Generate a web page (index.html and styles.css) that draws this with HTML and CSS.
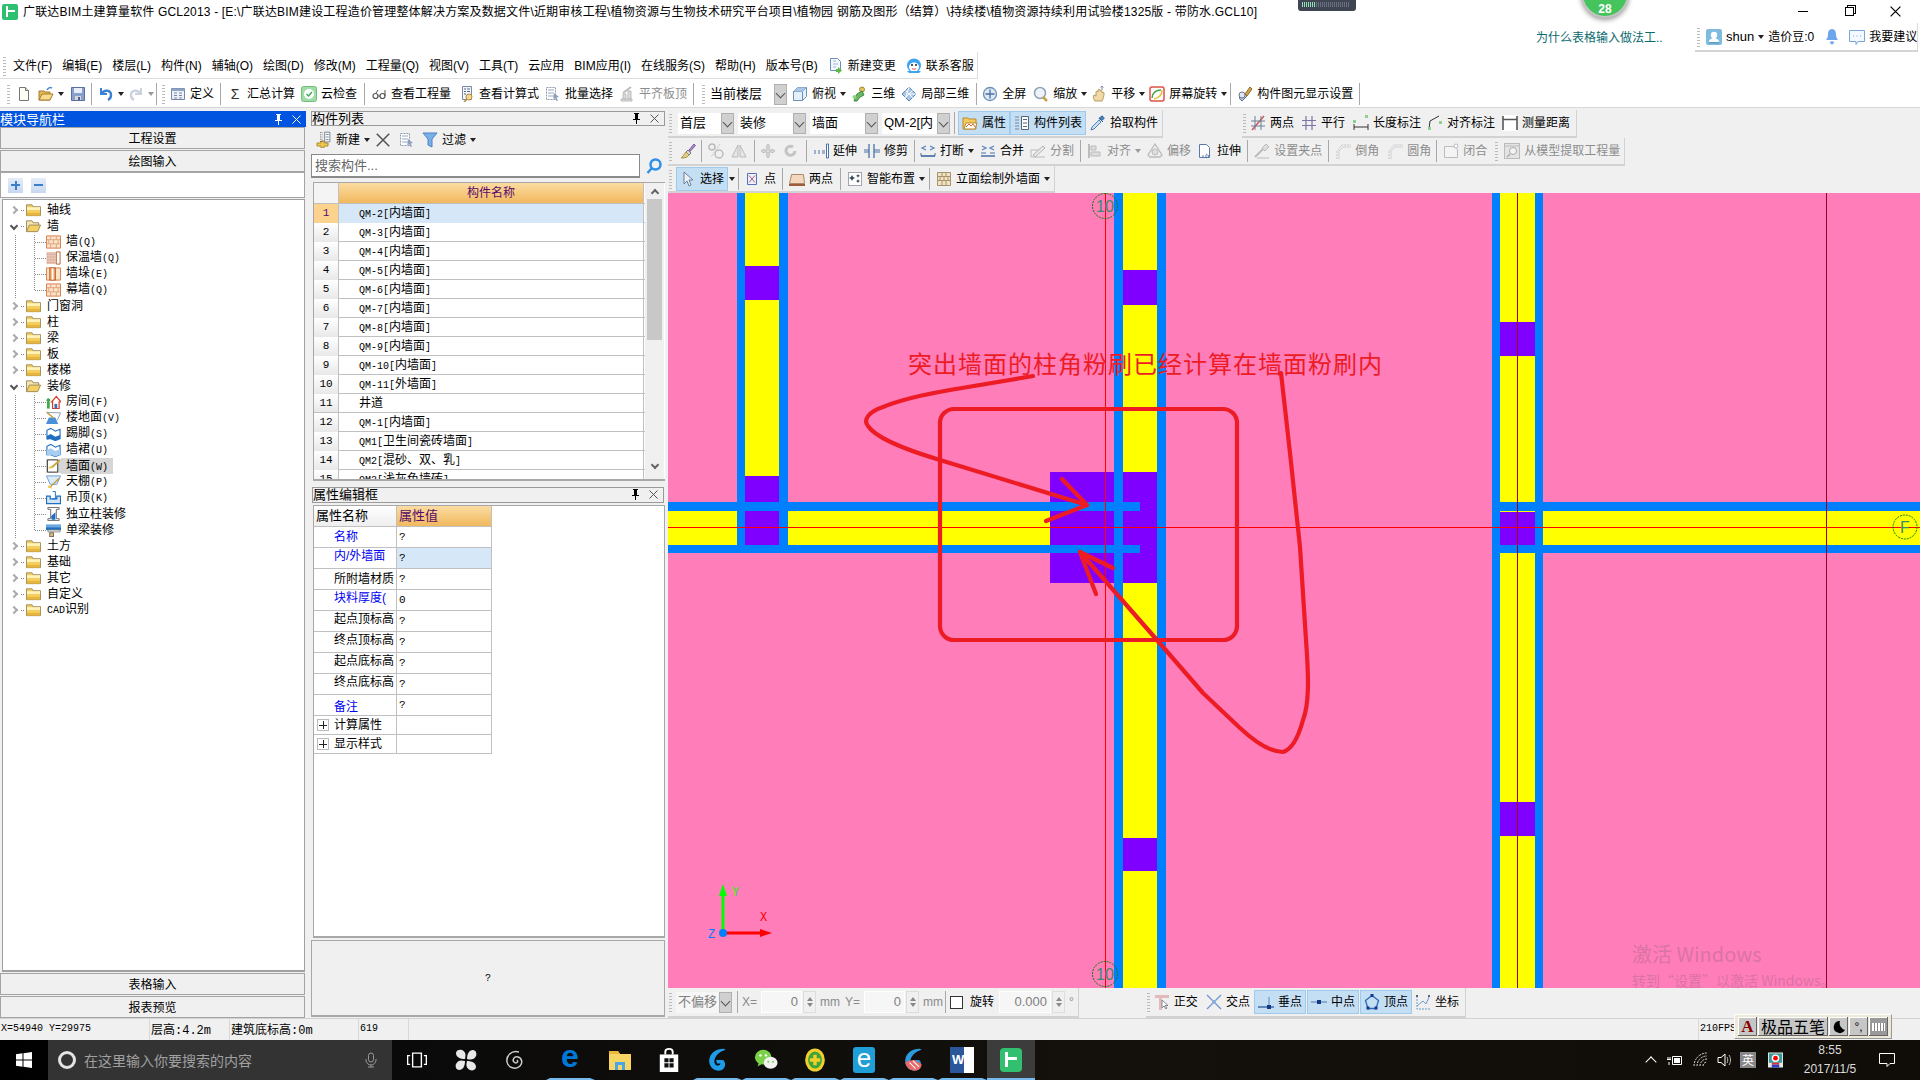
FILE: index.html
```html
<!DOCTYPE html>
<html lang="zh-CN">
<head>
<meta charset="utf-8">
<title>广联达BIM土建算量软件 GCL2013</title>
<link rel="stylesheet" href="styles.css">
</head>
<body>
<svg class="defs" width="0" height="0" aria-hidden="true">
<symbol id="new" viewBox="0 0 16 16"><path d="M3.5 1.5h6l3 3v10h-9z" fill="#fdfdf6" stroke="#777"/><path d="M9.5 1.5v3h3" fill="#ddd" stroke="#777"/></symbol>
<symbol id="open" viewBox="0 0 16 16"><path d="M1 14V5h5l1 1h5v8z" fill="#e7b955" stroke="#a67c2e"/><path d="M1 14l3-6h11l-3 6z" fill="#f8dc8e" stroke="#a67c2e"/><path d="M9 4c1-2 3-3 5-2" fill="none" stroke="#4a8ad0" stroke-width="1.5"/></symbol>
<symbol id="save" viewBox="0 0 16 16"><path d="M1.5 1.5h13v13h-13z" fill="#8aa0cc" stroke="#5a6f9f"/><path d="M4 2h8v5H4z" fill="#e8eef8"/><path d="M5 10h6v4H5z" fill="#d8d8d8"/><path d="M8 11h2v3H8z" fill="#4a5f8f"/></symbol>
<symbol id="undo" viewBox="0 0 16 16"><path d="M3 2v6h6" fill="none" stroke="#3b82d6" stroke-width="2"/><path d="M3.5 8C6 3 13 4 13 9c0 2-1 4-3 5" fill="none" stroke="#3b82d6" stroke-width="2.4"/></symbol>
<symbol id="redo" viewBox="0 0 16 16"><path d="M13 2v6H7" fill="none" stroke="#ccd3dc" stroke-width="2"/><path d="M12.5 8C10 3 3 4 3 9c0 2 1 4 3 5" fill="none" stroke="#ccd3dc" stroke-width="2.4"/></symbol>
<symbol id="def" viewBox="0 0 16 16"><path d="M1.5 2.5h13v11h-13z" fill="#eef2f8" stroke="#7487a8"/><path d="M1.5 2.5h13v2.5h-13z" fill="#8fa3c4"/><path d="M4 7h3M9 7h3M4 9.5h3M9 9.5h3M4 12h3M9 12h3" stroke="#7487a8"/></symbol>
<symbol id="cloud" viewBox="0 0 16 16"><rect x="0.5" y="0.5" width="15" height="15" rx="2" fill="#9fdca6" stroke="#6fbf7b"/><circle cx="8" cy="8" r="5" fill="#fff"/><path d="M5.5 8l2 2 3.5-4" fill="none" stroke="#45aa58" stroke-width="1.5"/></symbol>
<symbol id="glass" viewBox="0 0 16 16"><circle cx="4.5" cy="10" r="2.5" fill="none" stroke="#555" stroke-width="1.2"/><circle cx="11.5" cy="10" r="2.5" fill="none" stroke="#555" stroke-width="1.2"/><path d="M7 10h2M5 7l2-3M14 10V4" stroke="#555"/></symbol>
<symbol id="calc" viewBox="0 0 16 16"><path d="M3.5 .5h9v13h-9z" fill="#f3f5f9" stroke="#7a8aa6"/><path d="M5 3h2M8 3h3M5 5.5h2M8 5.5h3M5 8h2" stroke="#53688c"/><circle cx="10" cy="11" r="3" fill="#f6d896" stroke="#b08a3e"/><path d="M8 13l-3 3" stroke="#b08a3e" stroke-width="1.5"/></symbol>
<symbol id="batch" viewBox="0 0 16 16"><path d="M1.5 1.5h9v12h-9z" fill="#fff" stroke="#8a99b0" stroke-dasharray="2 1"/><path d="M3 4h6M3 7h6M3 10h6" stroke="#9aa9c0"/><path d="M9 7l5 4-2.500.5 1.500 3-1.500.5-1.200-3-2 1.500z" fill="#8aa0c0"/></symbol>
<symbol id="flat" viewBox="0 0 16 16"><path d="M2 13h11v2H2zM4 8h3v5H4zM9 5h3v8H9z" fill="#ddd" stroke="#bbb"/><path d="M4 7l8-6" stroke="#bbb" stroke-width="2"/></symbol>
<symbol id="cube" viewBox="0 0 16 16"><path d="M1.500 5.500l4-4h9v9l-4 4h-9z" fill="#e6f0fa" stroke="#6d8fb4"/><path d="M1.500 5.500h9v9M10.500 5.500l4-4" fill="none" stroke="#6d8fb4"/><path d="M1.500 5.500l4-4h9l-4 4z" fill="#a9c7e4"/></symbol>
<symbol id="d3" viewBox="0 0 16 16"><circle cx="11" cy="3.500" r="2.500" fill="#e3c35a" stroke="#9b8b3a"/><path d="M3 15l3-7 5-3 2 4-4 2-3 4z" fill="#6cb764" stroke="#3f8a3d"/><circle cx="3.500" cy="11" r="2" fill="#8fd081"/></symbol>
<symbol id="local" viewBox="0 0 16 16"><path d="M1 8l7-7 7 7-7 7z" fill="#a9c8e8" stroke="#5f86b4"/><path d="M4.500 4.500l7 7M8 1l-3.500 10.500M11.500 4.500l-7 7M8 8l7 0" stroke="#fff"/></symbol>
<symbol id="full" viewBox="0 0 16 16"><circle cx="8" cy="8" r="6.500" fill="#dce8f6" stroke="#6d8fb4" stroke-width="1.300"/><path d="M8 3.500v9M3.500 8h9" stroke="#4a6f9f" stroke-width="1.300"/></symbol>
<symbol id="zoom" viewBox="0 0 16 16"><circle cx="7" cy="7" r="5.500" fill="#eef3f9" stroke="#8fa3b9" stroke-width="1.500"/><path d="M10 11l4 4" stroke="#c8a24a" stroke-width="2.500"/></symbol>
<symbol id="pan" viewBox="0 0 16 16"><path d="M4 15c-2-3-2-5-1-6l2 1V6c0-1 2-1 2 0V4c0-1 2-1 2 0v1c0-1 2-1 2 0v2c0-1 2-1 2 0 0 4-1 6-2 8z" fill="#efd9a8" stroke="#b89a5e"/><path d="M11 0v4M9.500 1.500L11 0l1.500 1.500" fill="none" stroke="#7d8fa8"/></symbol>
<symbol id="rot" viewBox="0 0 16 16"><rect x="1" y="1" width="14" height="14" rx="2" fill="#fff" stroke="#e0504a" stroke-width="1.500"/><path d="M3 12c0-5 4-8 9-8" fill="none" stroke="#46a84b" stroke-width="1.500"/><path d="M13 4c0 5-3 8-8 9" fill="none" stroke="#e8c33b" stroke-width="1.500"/></symbol>
<symbol id="disp" viewBox="0 0 16 16"><path d="M2 12l5-5 3 3-5 5z" fill="#b7c3d4" stroke="#67778f"/><circle cx="5" cy="9" r="3" fill="#e2e7ef" stroke="#67778f"/><path d="M8 8l5-7 2 2-5 7z" fill="#d8a24a" stroke="#8b6a2e"/></symbol>
<symbol id="prop" viewBox="0 0 16 16"><path d="M1 14V3h5l1 1h7v10z" fill="#f5c95d" stroke="#b88b2d"/><path d="M2 14l2-6h11l-2 6z" fill="#fff" stroke="#b88b2d"/><path d="M4 12l3-3 2 2 2-2 2 3" fill="none" stroke="#d66a2c"/></symbol>
<symbol id="list" viewBox="0 0 16 16"><path d="M1.500 2h3M1.500 8h3M1.500 14h3M1.500 5h3M1.500 11h3" stroke="#333" stroke-dasharray="1 1"/><path d="M7.500 1.500h7v13h-7z" fill="#fff" stroke="#567"/><path d="M9 4.500h4M9 8h4M9 11.500h4" stroke="#567"/></symbol>
<symbol id="pick" viewBox="0 0 16 16"><path d="M1 15l1-3 7-7 2 2-7 7z" fill="#cfe0f2" stroke="#4a7fb8"/><path d="M9 3l4 4M11 1.500c1.500-1 3 .5 3 2l-2 2-3-2z" fill="#4a7fb8" stroke="#2a5f98"/></symbol>
<symbol id="twop" viewBox="0 0 16 16"><path d="M2 15L14 1" stroke="#d2534a" stroke-width="1.400"/><path d="M5 1v14M11 1v14M1 6h14M1 11h14" stroke="#6d7f9a"/></symbol>
<symbol id="par" viewBox="0 0 16 16"><path d="M5 1v14M11 1v14M1 5.500h14M1 10.500h14" stroke="#7c74a6" stroke-width="1.200"/></symbol>
<symbol id="len" viewBox="0 0 16 16"><path d="M1 15V9M15 15V9M1 12h14" stroke="#333"/><rect x="0" y="5" width="3" height="3" fill="#8fd08a"/><rect x="12" y="0" width="3" height="3" fill="#8fd08a"/></symbol>
<symbol id="ali" viewBox="0 0 16 16"><path d="M2 14L3 6l9-5" fill="none" stroke="#333"/><rect x="1" y="12" width="3" height="3" fill="#8fd08a"/><rect x="12" y="6" width="3" height="3" fill="#8fd08a"/></symbol>
<symbol id="meas" viewBox="0 0 16 16"><rect x="1" width="14" height="16" fill="#fff"/><path d="M1 1v14M15 1v14" stroke="#333" stroke-width="1.300"/><path d="M1 4.500h14" stroke="#555" stroke-width="1.500"/></symbol>
<symbol id="brush" viewBox="0 0 16 16"><path d="M9 7l5-6 1.500 1.500-5.500 6z" fill="#b08cd0" stroke="#7a5a9a"/><path d="M8 7l3 3-2 2-3-3z" fill="#d6d6d6" stroke="#777"/><path d="M6 9l3 3c-2 3-6 3-8 3 2-1 3-4 5-6z" fill="#e7d08a" stroke="#a98e3e"/></symbol>
<symbol id="g1" viewBox="0 0 16 16"><circle cx="4" cy="4" r="3" fill="none" stroke="#bbb" stroke-width="1.500"/><circle cx="11" cy="11" r="4" fill="none" stroke="#bbb" stroke-width="1.500"/><path d="M12 1L3 14" stroke="#c8c8c8" stroke-dasharray="2 1"/></symbol>
<symbol id="g2" viewBox="0 0 16 16"><path d="M7 2v12H1zM9 2v12h6z" fill="#e6e6e6" stroke="#bbb"/></symbol>
<symbol id="g3" viewBox="0 0 16 16"><path d="M8 1l2 3H9v3h3V6l3 2-3 2V9H9v3h1l-2 3-2-3h1V9H4v1L1 8l3-2v1h3V4H6z" fill="#ddd" stroke="#bbb"/></symbol>
<symbol id="g4" viewBox="0 0 16 16"><path d="M12 8a4.500 4.500 0 1 1-2-4" fill="none" stroke="#c4c4c4" stroke-width="3"/></symbol>
<symbol id="ext" viewBox="0 0 16 16"><path d="M1 8h2M5 8h2M9 8h3M1 10h2M5 10h2M9 10h3" stroke="#4a72a8"/><path d="M13.500 1v14h2V1z" fill="#fff" stroke="#4a72a8"/></symbol>
<symbol id="trim" viewBox="0 0 16 16"><path d="M5 1v14M10 1v14" stroke="#4a72a8" stroke-width="1.300"/><path d="M0 7h5M0 9h5M10 7h6M10 9h6" stroke="#4a72a8"/></symbol>
<symbol id="brk" viewBox="0 0 16 16"><path d="M1 10v3h14v-3" fill="none" stroke="#4a72a8"/><path d="M1 13h14" stroke="#4a72a8" stroke-width="1.500"/><path d="M6 3L2 5l4 2M10 3l4 2-4 2" fill="none" stroke="#5a86c0" stroke-width="1.300"/></symbol>
<symbol id="mrg" viewBox="0 0 16 16"><path d="M1 13h14" stroke="#4a72a8" stroke-width="1.500"/><path d="M1 10h5M10 10h5" stroke="#4a72a8"/><path d="M2 3l4 2-4 2M14 3l-4 2 4 2" fill="none" stroke="#5a86c0" stroke-width="1.300"/></symbol>
<symbol id="spl" viewBox="0 0 16 16"><path d="M1 14h14M1 14V7l9 0" fill="none" stroke="#bbb"/><path d="M3 12l10-9 2 2-10 9z" fill="#e8e8e8" stroke="#b4b4b4"/></symbol>
<symbol id="aln" viewBox="0 0 16 16"><path d="M2 1v14" stroke="#aaa" stroke-width="1.500"/><path d="M4 3h5v4H4zM4 9h9v4H4z" fill="#ddd" stroke="#bbb"/></symbol>
<symbol id="off" viewBox="0 0 16 16"><path d="M8 1L1 12l2 2h10l2-2z" fill="none" stroke="#bbb" stroke-width="1.300"/><circle cx="8" cy="9" r="3" fill="#ddd" stroke="#bbb"/></symbol>
<symbol id="str" viewBox="0 0 16 16"><path d="M2.500 1.500h7l3 3v10h-10z" fill="#fff" stroke="#5a7aa6"/><path d="M5 13h7M9 11l3 2-3 2" fill="none" stroke="#5a7aa6" stroke-dasharray="2 1"/></symbol>
<symbol id="grip" viewBox="0 0 16 16"><path d="M1 14l8-8" stroke="#bbb" stroke-width="2"/><path d="M8 5l4-4 3 3-4 4z" fill="#ddd" stroke="#bbb"/><path d="M3 15h12" stroke="#bbb"/></symbol>
<symbol id="cham" viewBox="0 0 16 16"><path d="M2 16V8l5-6h9" fill="none" stroke="#c4c4c4" stroke-dasharray="2 1"/><path d="M4 16V8l4-4h8" fill="none" stroke="#d0d0d0"/></symbol>
<symbol id="close" viewBox="0 0 16 16"><path d="M1.500 3.500h9.500l3.500 3v8h-13z" fill="#f4f4f4" stroke="#bbb"/><circle cx="13" cy="3" r="2" fill="#fff" stroke="#bbb"/></symbol>
<symbol id="extr" viewBox="0 0 16 16"><rect x=".5" y=".5" width="15" height="15" fill="#e4e4e4" stroke="#bbb"/><circle cx="9" cy="8" r="3.500" fill="#f4f4f4" stroke="#aaa"/><path d="M6 11l-3 3" stroke="#aaa" stroke-width="1.500"/><path d="M1 3h14" stroke="#bbb"/></symbol>
<symbol id="cur" viewBox="0 0 16 16"><path d="M4 1v12l3-3 2 5 2-1-2-5h4z" fill="#eef2f8" stroke="#6d7f9a"/></symbol>
<symbol id="pt" viewBox="0 0 16 16"><path d="M3.500 2.500h9v11h-9z" fill="#eef2fb" stroke="#5672b8"/><path d="M5 4.500l6 7M11 4.500l-6 7" stroke="#b05a82"/></symbol>
<symbol id="rect2" viewBox="0 0 16 16"><path d="M2.500 3.500h12l1 9H.5z" fill="#f4d7bc" stroke="#a88a6e"/><path d="M0 13h16v2H0z" fill="#a05b3c"/></symbol>
<symbol id="smart" viewBox="0 0 16 16"><path d="M1.500 1.500h13v13h-13z" fill="#fff" stroke="#556" stroke-dasharray="1 1"/><path d="M5 4l1 2 2 1-2 1-1 2-1-2-2-1 2-1zM11 8l.7 1.500L13 10l-1.300.7L11 12l-.7-1.300L9 10l1.300-.5zM11 3l.5 1L13 5l-1.500.5L11 7l-.5-1.500L9 5l1.500-1z" fill="#345"/></symbol>
<symbol id="wall" viewBox="0 0 16 16"><path d="M1.500 1.500h13v13h-13z" fill="#efe3c4" stroke="#a8946a"/><path d="M2 5.500h12M2 9.500h12M6 2v3.500M10 2v3.500M4 5.500v4M8 5.500v4M12 5.500v4M6 9.500v5M10 9.500v5" stroke="#a8946a"/></symbol>
<symbol id="ortho" viewBox="0 0 16 16"><path d="M1 1h14v3H1zM5 4h3v12H5z" fill="#e3b9b9"/><path d="M8 6v8l2-2 2 3 1-1-2-2.500h3z" fill="#fff" stroke="#889"/></symbol>
<symbol id="cross" viewBox="0 0 16 16"><path d="M1 1l14 14M15 1L1 15" stroke="#6c97d0" stroke-width="1.300"/><rect x="6" y="6" width="4" height="4" fill="#8faed8"/></symbol>
<symbol id="perp" viewBox="0 0 16 16"><path d="M0 13h16" stroke="#2b5a9e" stroke-width="1.300"/><path d="M11 3v10" stroke="#5a86c0"/><rect x="9" y="11" width="4" height="4" fill="#143a86"/></symbol>
<symbol id="mid" viewBox="0 0 16 16"><path d="M0 8h16" stroke="#6c8fc0" stroke-width="1.300"/><rect x="6" y="6" width="4" height="4" fill="#143a86"/></symbol>
<symbol id="vert" viewBox="0 0 16 16"><path d="M8 1.500l6.500 5-2.500 8H4l-2.500-8z" fill="none" stroke="#2b6cb8" stroke-width="1.300"/><rect x="6.500" y="0" width="3" height="3" fill="#143a86"/><rect x="2.500" y="12.500" width="3" height="3" fill="#143a86"/><rect x="10.500" y="12.500" width="3" height="3" fill="#143a86"/></symbol>
<symbol id="coord" viewBox="0 0 16 16"><path d="M2 2v13h13" fill="none" stroke="#6d9ad0" stroke-dasharray="2 1"/><path d="M2 12l6-5 3 3 3-7" fill="none" stroke="#6d9ad0"/><rect x="13" y="1" width="2" height="2" fill="#666"/><rect x="1" y="1" width="2" height="2" fill="#666"/></symbol>
<symbol id="pin" viewBox="0 0 9 11"><path d="M2 0h5v1H6v5h2v1H5v4H4V7H1V6h2V1H2z"/></symbol>
<symbol id="x" viewBox="0 0 9 9"><path d="M.5.500l8 8M8.500.500l-8 8" stroke="currentColor" fill="none"/></symbol>
<symbol id="fold" viewBox="0 0 16 14"><path d="M.5 13V1.500h6l1 2h8V13z" fill="#f6cf61" stroke="#9a8a5e"/><path d="M1 4h14v3H1z" fill="#fff1b8"/><path d="M1 10h14v3H1z" fill="#e8b53c"/></symbol>
<symbol id="foldo" viewBox="0 0 16 14"><path d="M.5 13V1.500h6l1 2h6V6" fill="#f3e6b4" stroke="#9a8a5e"/><path d="M.5 13l3-7h12l-3 7z" fill="#f6cf61" stroke="#9a8a5e"/></symbol>
<symbol id="brick" viewBox="0 0 16 14"><path d="M.5.500h15v13H.5z" fill="#fbe3c9" stroke="#d87a45"/><path d="M1 4.500h14M1 9h14M5 1v3.500M11 1v3.500M3 4.500V9M8 4.500V9M13 4.500V9M5 9v5M11 9v5" stroke="#e0a27a"/></symbol>
<symbol id="warm" viewBox="0 0 16 14"><path d="M.5.500h10v13H.5z" fill="#e9c7b7"/><path d="M11 .5h4v13h-4z" fill="#fff" stroke="#b75f2e"/><path d="M1 3h9M1 6h9M1 9h9M1 12h9" stroke="#d4968a" stroke-dasharray="2 1"/></symbol>
<symbol id="pier" viewBox="0 0 16 14"><path d="M.5.500h15v13H.5z" fill="#fbe3c9" stroke="#d87a45"/><path d="M4 .5h6v13H4z" fill="#f2a15f" stroke="#b75f2e"/><path d="M6 1h2v12H6z" fill="#fff"/></symbol>
<symbol id="room" viewBox="0 0 16 14"><path d="M6 7l5-6 5 6h-2v7H7V7z" fill="#fff" stroke="#d83a2a" stroke-width="1.300"/><path d="M9 9h3v5H9z" fill="#3a70b8"/><circle cx="2.500" cy="5" r="2" fill="#3faa4c"/><path d="M1 7h3v7H1z" fill="#3faa4c"/></symbol>
<symbol id="floor" viewBox="0 0 16 14"><path d="M.5 1l15 .5L12 9.500" fill="none" stroke="#8a9ab0"/><path d="M0 13.500l3-7h7l3 7z" fill="#4a90d8"/><path d="M1 1l7 6" stroke="#c99a3a" stroke-width="1.500"/></symbol>
<symbol id="skirt" viewBox="0 0 16 14"><path d="M1 12V3l4-2 5 3 5-2v10l-5 2-5-2z" fill="#fff" stroke="#1f6fc0" stroke-width="1.200"/><path d="M1 9l4-2 5 3 5-2v4l-5 2-5-2-4 1z" fill="#1f6fc0"/></symbol>
<symbol id="dado" viewBox="0 0 16 14"><path d="M1 12V3l4-2 5 3 5-2v10l-5 2-5-2z" fill="#fff" stroke="#1f6fc0" stroke-width="1.200"/><path d="M1 7l4-2 5 3 5-2v6l-5 2-5-2-4 1z" fill="#a9cdf0"/></symbol>
<symbol id="wallf" viewBox="0 0 16 14"><path d="M1.500.5h11v13h-11z" fill="#fff" stroke="#333"/><path d="M5 8l9-8 1.500 1.500L7 9z" fill="#c9a83e"/><path d="M2 9c2 1 4 1 5 0l-2-2z" fill="#e8c84e"/></symbol>
<symbol id="ceil" viewBox="0 0 16 14"><path d="M.5.500h15l-4 9h-7z" fill="#dcebf8" stroke="#6d9ad0"/><path d="M4 13l10-10" stroke="#c99a3a" stroke-width="1.500"/><path d="M3 10l4 4-5-1z" fill="#e8c84e"/></symbol>
<symbol id="hang" viewBox="0 0 16 14"><path d="M.5 5h4v3h7V5h4v8H.5z" fill="#cfe2f6" stroke="#1f6fc0" stroke-width="1.300"/><path d="M7 0h3v8H7" fill="none" stroke="#1f6fc0"/></symbol>
<symbol id="colf" viewBox="0 0 16 14"><path d="M2 0h12v2h-3v10h3v2H2v-2h3V2H2z" fill="#fff" stroke="#666"/><path d="M5.500 9L10 5v8H6z" fill="#1f6fc0"/></symbol>
<symbol id="beamf" viewBox="0 0 16 14"><path d="M0 1h16v3H0z" fill="#6aa8e4"/><path d="M0 4h16v3H0z" fill="#1f6fc0"/><path d="M2 7h13v2H2z" fill="#fff" stroke="#888"/><rect x="4" y="10" width="4" height="4" fill="#d8c07a" stroke="#765"/></symbol>
<symbol id="win" viewBox="0 0 16 16"><path d="M0 2.200L6.500 1.300v6.200H0zM7.500 1.200L16 0v7.500H7.500zM0 8.500h6.500v6.200L0 13.800zM7.500 8.500H16V16l-8.500-1.200z" fill="#fff"/></symbol>
<symbol id="mic" viewBox="0 0 16 16"><rect x="5.500" y="1" width="5" height="9" rx="2.500" fill="none" stroke="#999"/><path d="M3 7v1a5 5 0 0 0 10 0V7M8 13v2M5 15h6" fill="none" stroke="#999"/></symbol>
<symbol id="tv" viewBox="0 0 16 16"><path d="M4.500 2.500h7v11h-7zM2.500 4.500h-2v7h2M13.500 4.500h2v7h-2" fill="none" stroke="#fff" stroke-width="1.100"/></symbol>
<symbol id="fan" viewBox="0 0 24 24"><path d="M11 11C6 11 2 9 2 5c0-3 4-4 6-3 4 2 4 5 3 9zM13 11c0-5 2-9 6-9 3 0 4 4 3 6-2 4-5 4-9 3zM13 13c5 0 9 2 9 6 0 3-4 4-6 3-4-2-4-5-3-9zM11 13c0 5-2 9-6 9-3 0-4-4-3-6 2-4 5-4 9-3z" fill="#e8e8e8"/></symbol>
<symbol id="swirl" viewBox="0 0 20 20"><path d="M14 2C6 0 1 6 2 12c1 6 9 8 13 4 3-3 2-8-2-9-4-1-6 3-4 5 2 2 5 0 3-2" fill="none" stroke="#ccc" stroke-width="1.500"/></symbol>
<symbol id="fexp" viewBox="0 0 24 24"><path d="M1 3h9l2 3h11v16H1z" fill="#f6d565"/><path d="M1 3h9l2 3H1z" fill="#e8b93a"/><path d="M7 14h10v8H7z" fill="#46a6e8"/><path d="M10 17h4v5h-4z" fill="#f6d565"/></symbol>
<symbol id="store" viewBox="0 0 24 26"><path d="M2 7h20v19H2z" fill="#fff"/><path d="M8 7V4c0-4 8-4 8 0v3" fill="none" stroke="#fff" stroke-width="2"/><path d="M7 11h4.500v4.500H7zM12.500 11H17v4.500h-4.500zM7 16.500h4.500V21H7zM12.500 16.500H17V21h-4.500z" fill="#111"/></symbol>
<symbol id="gg" viewBox="0 0 24 28"><path d="M20 1C9 1 2 8 3 17c1 7 8 11 14 9 5-2 6-9 2-12l-8 0 1 4h4c0 2-3 3-5 2-3-2-3-8 2-13 3-3 6-4 9-5z" fill="#1e9be8"/></symbol>
<symbol id="wx" viewBox="0 0 26 24"><ellipse cx="10" cy="9" rx="9" ry="8" fill="#7bd148"/><path d="M5 15l-1 4 5-3z" fill="#7bd148"/><circle cx="7" cy="7" r="1.300" fill="#fff"/><circle cx="13" cy="7" r="1.300" fill="#fff"/><ellipse cx="18" cy="15" rx="7.500" ry="6.500" fill="#f2f2f2"/><circle cx="15.500" cy="14" r="1.100" fill="#7bd148"/><circle cx="20.500" cy="14" r="1.100" fill="#7bd148"/></symbol>
<symbol id="s360" viewBox="0 0 24 28"><ellipse cx="12" cy="14" rx="11.500" ry="13.500" fill="#f3cf2c"/><ellipse cx="12" cy="14" rx="8" ry="10" fill="#3fa43a"/><path d="M10 8h4v4h4v4h-4v4h-4v-4H6v-4h4z" fill="#f3cf2c"/></symbol>
<symbol id="gg2" viewBox="0 0 24 28"><path d="M20 1C9 1 2 8 3 17c1 7 8 11 14 9 5-2 6-9 2-12l-8 0 1 4h4c0 2-3 3-5 2-3-2-3-8 2-13 3-3 6-4 9-5z" fill="#2b9ae0"/><path d="M3 17c1 7 8 11 14 9 4-1 5-5 5-7l-8-5-8 1z" fill="#e86a6a"/><path d="M8 17l7 7M12 15l7 7" stroke="#fff" stroke-width="1.200"/></symbol>
<symbol id="chat" viewBox="0 0 16 16"><path d="M.5 1.500h15v11H9l-2 3v-3H.5z" fill="#f4f8ff" stroke="#7aa4dc"/><path d="M4 7h1M7.500 7h1M11 7h1" stroke="#7aa4dc"/></symbol>
<symbol id="bell" viewBox="0 0 12 16"><path d="M6 0c3 0 4 3 4 5 0 3 1 5 2 6H0c1-1 2-3 2-6 0-2 1-5 4-5z" fill="#6ea6ec"/><path d="M4 12.500h4c0 2-1 3-2 3s-2-1-2-3z" fill="#6ea6ec"/></symbol>
<symbol id="usr" viewBox="0 0 16 16"><rect width="16" height="16" rx="2" fill="#7fbbe0"/><circle cx="8" cy="6" r="3.200" fill="#fff"/><path d="M3 13c0-3 3-4 5-4s5 1 5 4z" fill="#fff"/><path d="M3 13h10v1.500H3z" fill="#5f9bc4"/></symbol>
<symbol id="newdoc" viewBox="0 0 16 16"><path d="M2.500 .5h7l3 3v9h-10z" fill="#f6fafe" stroke="#6a90c0"/><path d="M5 3h3M5 6h5M5 9h3" stroke="#9ab4d4"/><path d="M10 9v2H8v3h2v2l4-3.500z" fill="#5fb848"/></symbol>
<symbol id="svc" viewBox="0 0 16 16"><circle cx="8" cy="7.500" r="7" fill="#3ea3ee"/><ellipse cx="8" cy="9" rx="5" ry="4.500" fill="#fff"/><circle cx="6" cy="7" r="1" fill="#123"/><circle cx="10" cy="7" r="1" fill="#123"/><path d="M6 10.500c1 1 3 1 4 0" fill="none" stroke="#e05050"/><path d="M1 13h14l-2 2H3z" fill="#3ea3ee"/></symbol>
<symbol id="newc" viewBox="0 0 16 16"><path d="M1 11h4V9h3v2h4v3H8v2H5v-2H1z" fill="#f0c850" stroke="#b08a2e"/></symbol>
<symbol id="fnl" viewBox="0 0 16 16"><path d="M1 1h14l-5 6v8l-4-2V7z" fill="#7ab0e8" stroke="#4a80c0"/></symbol>
<symbol id="srch" viewBox="0 0 16 16"><circle cx="9.500" cy="6.500" r="5" fill="none" stroke="#2e90e8" stroke-width="2.500"/><path d="M5.500 10.500L1.500 15" stroke="#2e90e8" stroke-width="2.500"/></symbol>
<symbol id="moon" viewBox="0 0 14 14"><path d="M8 1a6 6 0 1 0 5 9A7 7 0 0 1 8 1z" fill="#000"/></symbol>
<symbol id="batt" viewBox="0 0 16 14"><path d="M1 4v3M3 4v3M0 6.500h4M2 9v3" stroke="#fff" fill="none"/><path d="M5.500 3.500h9v8h-9z" fill="none" stroke="#fff"/><path d="M7 5h6v5H7z" fill="#fff"/></symbol>
<symbol id="wifi" viewBox="0 0 16 16"><path d="M1 14A13 13 0 0 1 14 1M4 14A10 10 0 0 1 14 4M7 14A7 7 0 0 1 14 7M10 14A4 4 0 0 1 14 10" fill="none" stroke="#ddd" stroke-dasharray="2 1"/></symbol>
<symbol id="vol" viewBox="0 0 16 16"><path d="M1 5.500h3L8 2v12l-4-3.500H1z" fill="none" stroke="#fff"/><path d="M10 5c1 2 1 4 0 6M12 3c2 3 2 7 0 10" fill="none" stroke="#bbb"/></symbol>
<symbol id="bub" viewBox="0 0 16 14"><path d="M.5.500h15v10H11l-3 3v-3H.5z" fill="none" stroke="#fff"/></symbol>
<symbol id="flg" viewBox="0 0 16 16"><rect width="16" height="16" fill="#e8e8e8"/><rect x="1" y="1" width="14" height="10" fill="#3a9a9a"/><circle cx="8" cy="6" r="4" fill="#fff"/><circle cx="8" cy="6" r="2.500" fill="#f00"/><rect x="4" y="11" width="8" height="2" fill="#e03030"/><rect x="4" y="13" width="8" height="3" fill="#3040c0"/></symbol>
</svg>

<div class="app">
  <header class="top">
    <div class="titlerow">
      <span class="logo"><i class="lg1"></i></span>
      <span class="apptitle">广联达BIM土建算量软件 GCL2013 - [E:\广联达BIM建设工程造价管理整体解决方案及数据文件\近期审核工程\植物资源与生物技术研究平台项目\植物园 钢筋及图形（结算）\持续楼\植物资源持续利用试验楼1325版 - 带防水.GCL10]</span>
      <span class="winctl"><i class="wmin"></i></span>
      <span class="winctl"><i class="wmax"></i></span>
      <span class="winctl"><svg class="wx"><use href="#x"/></svg></span>
    </div>
    <div class="recorder"><i class="rec-on"></i><i class="rec-off"></i></div>
    <div class="badge">28</div>
    <div class="noticerow">
      <a class="notice">为什么表格输入做法工..</a>
      <div class="userbar">
        <i class="grip"></i>
        <svg class="ic"><use href="#usr"/></svg>
        <span class="uname">shun</span><i class="dd"></i>
        <span class="nw">造价豆:0</span>
        <svg class="ic bell"><use href="#bell"/></svg>
        <svg class="ic"><use href="#chat"/></svg>
        <span class="nw">我要建议</span>
      </div>
    </div>
    <nav class="menubar">
      <i class="grip"></i>
      <span>文件(F)</span><span>编辑(E)</span><span>楼层(L)</span><span>构件(N)</span><span>辅轴(O)</span><span>绘图(D)</span><span>修改(M)</span><span>工程量(Q)</span><span>视图(V)</span><span>工具(T)</span><span>云应用</span><span>BIM应用(I)</span><span>在线服务(S)</span><span>帮助(H)</span><span>版本号(B)</span>
      <span class="ti"><svg class="ic"><use href="#newdoc"/></svg>新建变更</span>
      <span class="ti"><svg class="ic"><use href="#svc"/></svg>联系客服</span>
    </nav>
    <div class="tb mainbar">
      <i class="grip"></i>
      <span class="ti"><svg class="ic"><use href="#new"/></svg></span>
      <span class="ti"><svg class="ic"><use href="#open"/></svg><i class="dd"></i></span>
      <span class="ti"><svg class="ic"><use href="#save"/></svg></span>
      <i class="sep m-1"></i>
      <span class="ti"><svg class="ic"><use href="#undo"/></svg><i class="dd"></i></span>
      <span class="ti off m-2"><svg class="ic"><use href="#redo"/></svg><i class="dd"></i></span>
      <i class="sep m-4"></i>
      <i class="grip m-1"></i>
      <span class="ti m-1"><svg class="ic"><use href="#def"/></svg>定义</span>
      <i class="sep"></i>
      <span class="ti"><span class="sigma">Σ</span>汇总计算</span>
      <span class="ti"><svg class="ic"><use href="#cloud"/></svg>云检查</span>
      <i class="sep m1"></i>
      <span class="ti"><svg class="ic"><use href="#glass"/></svg>查看工程量</span>
      <span class="ti m2"><svg class="ic"><use href="#calc"/></svg>查看计算式</span>
      <span class="ti"><svg class="ic"><use href="#batch"/></svg>批量选择</span>
      <span class="ti off"><svg class="ic"><use href="#flat"/></svg>平齐板顶</span>
      <i class="sep"></i>
      <i class="grip m2"></i>
      <span class="sel sel-floor m-3"><b>当前楼层</b><i class="chev"></i></span>
      <span class="ti m-1"><svg class="ic"><use href="#cube"/></svg>俯视<i class="dd"></i></span>
      <span class="ti m-1"><svg class="ic"><use href="#d3"/></svg>三维</span>
      <span class="ti"><svg class="ic"><use href="#local"/></svg>局部三维</span>
      <i class="sep m1"></i>
      <span class="ti m-1"><svg class="ic"><use href="#full"/></svg>全屏</span>
      <span class="ti m1"><svg class="ic"><use href="#zoom"/></svg>缩放<i class="dd"></i></span>
      <span class="ti m-2"><svg class="ic"><use href="#pan"/></svg>平移<i class="dd"></i></span>
      <span class="ti m-2"><svg class="ic"><use href="#rot"/></svg>屏幕旋转<i class="dd"></i></span>
      <i class="sep m-3"></i>
      <span class="ti"><svg class="ic"><use href="#disp"/></svg>构件图元显示设置</span>
      <i class="sep"></i>
    </div>
  </header>

  <main class="work">
    <aside class="nav">
      <div class="paneltitle active"><span>模块导航栏</span><svg class="pin"><use href="#pin"/></svg><svg class="cl"><use href="#x"/></svg></div>
      <button class="navbtn">工程设置</button>
      <button class="navbtn">绘图输入</button>
      <div class="treebar"><span class="tbtn plus"></span><span class="tbtn"></span></div>
      <div class="tree">
        <div class="r"><i class="cv"></i><i class="tw"></i><svg class="fd"><use href="#fold"/></svg><span>轴线</span></div>
        <div class="r"><i class="cv open"></i><i class="tw"></i><svg class="fd"><use href="#foldo"/></svg><span>墙</span></div>
        <div class="r kid"><i class="gd"></i><svg class="fd"><use href="#brick"/></svg><span class="t2">墙<b>(Q)</b></span></div>
        <div class="r kid"><i class="gd"></i><svg class="fd"><use href="#warm"/></svg><span class="t2">保温墙<b>(Q)</b></span></div>
        <div class="r kid"><i class="gd"></i><svg class="fd"><use href="#pier"/></svg><span class="t2">墙垛<b>(E)</b></span></div>
        <div class="r kid"><i class="gd end"></i><svg class="fd"><use href="#brick"/></svg><span class="t2">幕墙<b>(Q)</b></span></div>
        <div class="r"><i class="cv"></i><i class="tw"></i><svg class="fd"><use href="#fold"/></svg><span>门窗洞</span></div>
        <div class="r"><i class="cv"></i><i class="tw"></i><svg class="fd"><use href="#fold"/></svg><span>柱</span></div>
        <div class="r"><i class="cv"></i><i class="tw"></i><svg class="fd"><use href="#fold"/></svg><span>梁</span></div>
        <div class="r"><i class="cv"></i><i class="tw"></i><svg class="fd"><use href="#fold"/></svg><span>板</span></div>
        <div class="r"><i class="cv"></i><i class="tw"></i><svg class="fd"><use href="#fold"/></svg><span>楼梯</span></div>
        <div class="r"><i class="cv open"></i><i class="tw"></i><svg class="fd"><use href="#foldo"/></svg><span>装修</span></div>
        <div class="r kid"><i class="gd"></i><svg class="fd"><use href="#room"/></svg><span class="t2">房间<b>(F)</b></span></div>
        <div class="r kid"><i class="gd"></i><svg class="fd"><use href="#floor"/></svg><span class="t2">楼地面<b>(V)</b></span></div>
        <div class="r kid"><i class="gd"></i><svg class="fd"><use href="#skirt"/></svg><span class="t2">踢脚<b>(S)</b></span></div>
        <div class="r kid"><i class="gd"></i><svg class="fd"><use href="#dado"/></svg><span class="t2">墙裙<b>(U)</b></span></div>
        <div class="r kid picked"><i class="gd"></i><svg class="fd"><use href="#wallf"/></svg><span class="t2">墙面<b>(W)</b></span></div>
        <div class="r kid"><i class="gd"></i><svg class="fd"><use href="#ceil"/></svg><span class="t2">天棚<b>(P)</b></span></div>
        <div class="r kid"><i class="gd"></i><svg class="fd"><use href="#hang"/></svg><span class="t2">吊顶<b>(K)</b></span></div>
        <div class="r kid"><i class="gd"></i><svg class="fd"><use href="#colf"/></svg><span class="t2">独立柱装修</span></div>
        <div class="r kid"><i class="gd end"></i><svg class="fd"><use href="#beamf"/></svg><span class="t2">单梁装修</span></div>
        <div class="r"><i class="cv"></i><i class="tw"></i><svg class="fd"><use href="#fold"/></svg><span>土方</span></div>
        <div class="r"><i class="cv"></i><i class="tw"></i><svg class="fd"><use href="#fold"/></svg><span>基础</span></div>
        <div class="r"><i class="cv"></i><i class="tw"></i><svg class="fd"><use href="#fold"/></svg><span>其它</span></div>
        <div class="r"><i class="cv"></i><i class="tw"></i><svg class="fd"><use href="#fold"/></svg><span>自定义</span></div>
        <div class="r"><i class="cv"></i><i class="tw"></i><svg class="fd"><use href="#fold"/></svg><span class="t2"><b>CAD</b>识别</span></div>
      </div>
      <button class="navbtn">表格输入</button>
      <button class="navbtn">报表预览</button>
    </aside>

    <section class="mid">
      <div class="paneltitle"><span>构件列表</span><svg class="pin"><use href="#pin"/></svg><svg class="cl"><use href="#x"/></svg></div>
      <div class="tb listbar">
        <span class="ti"><svg class="ic"><use href="#newc"/></svg><svg class="ic newic"><use href="#list"/></svg>新建<i class="dd"></i></span>
        <svg class="ic delx"><use href="#x"/></svg>
        <svg class="ic m3"><use href="#batch"/></svg>
        <span class="ti m1"><svg class="ic"><use href="#fnl"/></svg>过滤<i class="dd"></i></span>
      </div>
      <div class="searchrow">
        <div class="search">搜索构件...</div>
        <svg class="ic"><use href="#srch"/></svg>
      </div>
      <div class="listbox">
        <div class="listview">
          <div class="lrow head"><span class="lnum"></span><span class="lname">构件名称</span></div>
          <div class="lrow on"><span class="lnum">1</span><span class="lname"><b>QM-2[</b>内墙面<b>]</b></span></div>
          <div class="lrow"><span class="lnum">2</span><span class="lname"><b>QM-3[</b>内墙面<b>]</b></span></div>
          <div class="lrow"><span class="lnum">3</span><span class="lname"><b>QM-4[</b>内墙面<b>]</b></span></div>
          <div class="lrow"><span class="lnum">4</span><span class="lname"><b>QM-5[</b>内墙面<b>]</b></span></div>
          <div class="lrow"><span class="lnum">5</span><span class="lname"><b>QM-6[</b>内墙面<b>]</b></span></div>
          <div class="lrow"><span class="lnum">6</span><span class="lname"><b>QM-7[</b>内墙面<b>]</b></span></div>
          <div class="lrow"><span class="lnum">7</span><span class="lname"><b>QM-8[</b>内墙面<b>]</b></span></div>
          <div class="lrow"><span class="lnum">8</span><span class="lname"><b>QM-9[</b>内墙面<b>]</b></span></div>
          <div class="lrow"><span class="lnum">9</span><span class="lname"><b>QM-10[</b>内墙面<b>]</b></span></div>
          <div class="lrow"><span class="lnum">10</span><span class="lname"><b>QM-11[</b>外墙面<b>]</b></span></div>
          <div class="lrow"><span class="lnum">11</span><span class="lname">井道</span></div>
          <div class="lrow"><span class="lnum">12</span><span class="lname"><b>QM-1[</b>内墙面<b>]</b></span></div>
          <div class="lrow"><span class="lnum">13</span><span class="lname"><b>QM1[</b>卫生间瓷砖墙面<b>]</b></span></div>
          <div class="lrow"><span class="lnum">14</span><span class="lname"><b>QM2[</b>混砂、双、乳<b>]</b></span></div>
          <div class="lrow"><span class="lnum">15</span><span class="lname"><b>QM3[</b>浅灰色墙砖<b>]</b></span></div>
        </div>
        <div class="vscroll"><i class="up"></i><i class="thumb"></i><i class="down"></i></div>
      </div>
      <div class="paneltitle second"><span>属性编辑框</span><svg class="pin"><use href="#pin"/></svg><svg class="cl"><use href="#x"/></svg></div>
      <div class="propbox">
        <div class="proptable">
          <div class="phead">属性名称</div><div class="phead val">属性值</div>
          <div class="pn blue">名称</div><div class="pv">?</div>
          <div class="pn blue hi">内/外墙面</div><div class="pv on">?</div>
          <div class="pn">所附墙材质</div><div class="pv">?</div>
          <div class="pn blue hi">块料厚度(</div><div class="pv">0</div>
          <div class="pn hi">起点顶标高</div><div class="pv">?</div>
          <div class="pn hi">终点顶标高</div><div class="pv">?</div>
          <div class="pn hi">起点底标高</div><div class="pv">?</div>
          <div class="pn hi">终点底标高</div><div class="pv">?</div>
          <div class="pn blue lo">备注</div><div class="pv">?</div>
          <div class="pn grp"><i class="pl"></i>计算属性</div><div class="pv grp"></div>
          <div class="pn grp"><i class="pl"></i>显示样式</div><div class="pv grp"></div>
        </div>
      </div>
      <div class="descbox">?</div>
    </section>

    <section class="right">
      <div class="rows">
        <div class="rowline">
          <div class="tb tight panel">
            <i class="grip"></i>
            <span class="sel s56 m2"><b>首层</b><i class="chev"></i></span>
            <span class="sel s68"><b>装修</b><i class="chev"></i></span>
            <span class="sel s68"><b>墙面</b><i class="chev"></i></span>
            <span class="sel s68"><b>QM-2[内</b><i class="chev"></i></span>
            <i class="sep"></i>
            <span class="ti press m-1"><svg class="ic"><use href="#prop"/></svg>属性</span>
            <span class="ti press m-4"><svg class="ic"><use href="#list"/></svg>构件列表</span>
            <span class="ti"><svg class="ic"><use href="#pick"/></svg>拾取构件</span>
          </div>
          <div class="tb panel push79">
            <i class="grip"></i>
            <span class="ti m-2"><svg class="ic"><use href="#twop"/></svg>两点</span>
            <span class="ti m1"><svg class="ic"><use href="#par"/></svg>平行</span>
            <span class="ti m2"><svg class="ic"><use href="#len"/></svg>长度标注</span>
            <span class="ti"><svg class="ic"><use href="#ali"/></svg>对齐标注</span>
            <span class="ti m1"><svg class="ic"><use href="#meas"/></svg>测量距离</span>
          </div>
        </div>
        <div class="rowline">
          <div class="tb panel">
            <i class="grip"></i>
            <svg class="ic m2"><use href="#brush"/></svg>
            <i class="sep m-1"></i>
            <svg class="ic"><use href="#g1"/></svg>
            <svg class="ic m1"><use href="#g2"/></svg>
            <i class="sep m1"></i>
            <svg class="ic m-1"><use href="#g3"/></svg>
            <svg class="ic m1"><use href="#g4"/></svg>
            <i class="sep m1"></i>
            <span class="ti"><svg class="ic"><use href="#ext"/></svg>延伸</span>
            <span class="ti m1"><svg class="ic"><use href="#trim"/></svg>修剪</span>
            <i class="sep"></i>
            <span class="ti m-1"><svg class="ic"><use href="#brk"/></svg>打断<i class="dd"></i></span>
            <span class="ti"><svg class="ic"><use href="#mrg"/></svg>合并</span>
            <span class="ti off"><svg class="ic"><use href="#spl"/></svg>分割</span>
            <i class="sep"></i>
            <span class="ti off"><svg class="ic"><use href="#aln"/></svg>对齐<i class="dd"></i></span>
            <span class="ti off"><svg class="ic"><use href="#off"/></svg>偏移</span>
            <span class="ti"><svg class="ic"><use href="#str"/></svg>拉伸</span>
            <i class="sep"></i>
            <span class="ti off"><svg class="ic"><use href="#grip"/></svg>设置夹点</span>
            <i class="sep"></i>
            <span class="ti off"><svg class="ic"><use href="#cham"/></svg>倒角</span>
            <span class="ti off m2"><svg class="ic"><use href="#cham"/></svg>圆角</span>
            <i class="sep m-1"></i>
            <span class="ti off"><svg class="ic"><use href="#close"/></svg>闭合</span>
            <i class="grip m2"></i>
            <span class="ti off"><svg class="ic"><use href="#extr"/></svg>从模型提取工程量</span>
          </div>
        </div>
        <div class="rowline">
          <div class="tb panel">
            <i class="grip"></i>
            <span class="ti press m-2"><svg class="ic"><use href="#cur"/></svg>选择</span>
            <i class="dd m-5"></i>
            <i class="sep m-3"></i>
            <span class="ti m-1"><svg class="ic"><use href="#pt"/></svg>点</span>
            <i class="sep"></i>
            <span class="ti"><svg class="ic"><use href="#rect2"/></svg>两点</span>
            <i class="sep m1"></i>
            <span class="ti"><svg class="ic"><use href="#smart"/></svg>智能布置<i class="dd"></i></span>
            <i class="sep m-2"></i>
            <span class="ti"><svg class="ic"><use href="#wall"/></svg>立面绘制外墙面<i class="dd"></i></span>
          </div>
        </div>
      </div>

      <svg class="canvas" viewBox="668 193 1252 795" width="1252" height="795" role="img" aria-label="绘图区">
        <rect class="pink" x="668" y="193" width="1252" height="795"/>
        <rect class="y" x="668" y="511" width="382" height="34"/>
        <rect class="y" x="745" y="193" width="34" height="352"/>
        <rect class="y" x="1123" y="193" width="34" height="795"/>
        <rect class="y" x="1500" y="193" width="35" height="795"/>
        <rect class="y" x="1535" y="511" width="385" height="34"/>
        <rect class="p" x="745" y="266" width="34" height="34"/>
        <rect class="p" x="745" y="476" width="34" height="69"/>
        <rect class="p" x="1050" y="472" width="107" height="111"/>
        <rect class="p" x="1123" y="270" width="34" height="35"/>
        <rect class="p" x="1123" y="838" width="34" height="33"/>
        <rect class="p" x="1500" y="322" width="35" height="34"/>
        <rect class="p" x="1500" y="512" width="35" height="33"/>
        <rect class="p" x="1500" y="802" width="35" height="34"/>
        <rect class="b" x="668" y="502" width="472" height="9"/>
        <rect class="b" x="668" y="545" width="472" height="8"/>
        <rect class="b" x="737" y="193" width="8" height="360"/>
        <rect class="b" x="779" y="193" width="9" height="360"/>
        <rect class="b" x="1114" y="193" width="9" height="795"/>
        <rect class="b" x="1157" y="193" width="9" height="795"/>
        <rect class="b" x="1492" y="193" width="8" height="795"/>
        <rect class="b" x="1535" y="193" width="8" height="795"/>
        <rect class="b" x="1492" y="502" width="428" height="9"/>
        <rect class="b" x="1492" y="545" width="428" height="8"/>
        <path class="axis" d="M668 527.500H1920M1105.500 193V988"/>
        <path class="axis dark" d="M1517.500 193V988M1826.500 193V988"/>
        <g class="bubble">
          <circle cx="1105" cy="206" r="12.500"/><text x="1105" y="212">10</text>
          <circle cx="1105" cy="974" r="12.500"/><text x="1105" y="980">10</text>
          <circle cx="1905" cy="527" r="12"/><text x="1905" y="533">F</text>
        </g>
        <g class="ucs">
          <path class="gr" d="M723 933V893"/><path class="grf" d="M723 884l-4 12h8z"/>
          <path class="rd" d="M723 933H762"/><path class="rdf" d="M772 933l-12-4v8z"/>
          <circle class="zd" cx="723" cy="933" r="4"/>
          <text class="tg" x="732" y="896">Y</text>
          <text class="tr" x="760" y="921">X</text>
          <text class="tb2" x="708" y="938">Z</text>
        </g>
        <text class="note" x="908" y="373">突出墙面的柱角粉刷已经计算在墙面粉刷内</text>
        <rect class="mark" x="940" y="409" width="297" height="231" rx="14"/>
        <path class="mark" d="M1033 376L950 390C915 396 895 402 883 407C868 412 863 420 868 426C875 437 900 448 940 460L1087 505"/>
        <path class="mark" d="M1062 479L1087 505L1046 521"/>
        <path class="mark" d="M1281 373L1290 453L1300 547L1306 640C1309 680 1309 705 1303 720C1297 742 1290 750 1283 752C1270 752 1255 742 1240 728L1203 693L1157 640L1080 552"/>
        <path class="mark" d="M1113 568L1080 552L1096 594"/>
        <text class="wm big" x="1632" y="962">激活 Windows</text>
        <text class="wm" x="1632" y="986">转到“设置”以激活 Windows。</text>
      </svg>

      <div class="rowline bottom">
        <div class="tb tight panel grayx">
          <i class="grip"></i>
          <span class="sel s56 dim"><b>不偏移</b><i class="chev"></i></span>
          <i class="sep m1"></i>
          <span>X=</span>
          <span class="num w41">0</span><span class="spin m-3"><i></i><i></i></span>
          <span>mm</span>
          <span class="m1">Y=</span>
          <span class="num w41">0</span><span class="spin m-3"><i></i><i></i></span>
          <span>mm</span>
          <i class="sep m-2"></i>
          <i class="check"></i>
          <span class="m3 blk">旋转</span>
          <span class="num w52 m1">0.000</span><span class="spin m-3"><i></i><i></i></span>
          <span>°</span>
        </div>
        <div class="tb tight panel push67">
          <i class="grip"></i>
          <span class="ti"><svg class="ic"><use href="#ortho"/></svg>正交</span>
          <span class="ti m4"><svg class="ic"><use href="#cross"/></svg>交点</span>
          <span class="ti press"><svg class="ic"><use href="#perp"/></svg>垂点</span>
          <span class="ti press m-3"><svg class="ic"><use href="#mid"/></svg>中点</span>
          <span class="ti press m-3"><svg class="ic"><use href="#vert"/></svg>顶点</span>
          <span class="ti m-1"><svg class="ic"><use href="#coord"/></svg>坐标</span>
        </div>
      </div>
    </section>
  </main>

  <footer class="status">
    <span class="c1">X=54940 Y=29975</span>
    <span class="c2">层高<b>:4.2m</b></span>
    <span class="c3">建筑底标高<b>:0m</b></span>
    <span class="c4">619</span>
    <span class="c5">210FPS</span>
    <div class="ime">
      <span class="k a">A</span><span class="k name">极品五笔</span><span class="k"><svg class="i14"><use href="#moon"/></svg></span><span class="k dots">°,</span><span class="k kbd"></span>
    </div>
  </footer>

  <div class="taskbar">
    <span class="start"><svg class="ic"><use href="#win"/></svg></span>
    <div class="tsearch"><i class="cortana"></i><span>在这里输入你要搜索的内容</span><svg class="ic tmic"><use href="#mic"/></svg></div>
    <span class="slot"><svg class="i20"><use href="#tv"/></svg></span>
    <span class="slot"><svg class="i24"><use href="#fan"/></svg></span>
    <span class="slot"><svg class="i20"><use href="#swirl"/></svg></span>
    <span class="slot run g5"><span class="edge">e</span></span>
    <span class="slot run-n"><svg class="i24"><use href="#fexp"/></svg></span>
    <span class="slot"><svg class="i24"><use href="#store"/></svg></span>
    <span class="slot run"><svg class="i24"><use href="#gg"/></svg></span>
    <span class="slot run"><svg class="i24"><use href="#wx"/></svg></span>
    <span class="slot run"><svg class="i24"><use href="#s360"/></svg></span>
    <span class="slot run"><span class="ie">e</span></span>
    <span class="slot run"><svg class="i24"><use href="#gg2"/></svg></span>
    <span class="slot run"><span class="word"><b>W</b></span></span>
    <span class="slot run cur"><span class="gcl"><i class="lg1"></i></span></span>
    <div class="tray">
      <i class="caret"></i>
      <svg class="tri batt"><use href="#batt"/></svg>
      <svg class="tri wifi"><use href="#wifi"/></svg>
      <svg class="tri vol"><use href="#vol"/></svg>
      <span class="imebox">英</span>
      <svg class="tri flag"><use href="#flg"/></svg>
      <span class="clock"><span>8:55</span><span>2017/11/5</span></span>
      <svg class="tri notif"><use href="#bub"/></svg>
    </div>
  </div>
</div>
</body>
</html>
```

FILE: styles.css
```css
* { box-sizing: border-box; }
html, body { margin: 0; padding: 0; }
body {
  width: 1920px; height: 1080px; overflow: hidden; background: #f0f0f0; color: #000;
  font: 12px/16px "Liberation Sans", "Noto Sans CJK SC", sans-serif;
}
.defs { position: absolute; }
i { font-style: normal; display: block; flex: none; }
.app { display: flex; flex-direction: column; height: 1080px; }
.nw { white-space: nowrap; flex: none; }

/* top */
.top { height: 108px; background: #fff; position: relative; border-bottom: 1px solid #d8d8d8; flex: none; }
.titlerow { height: 23px; display: flex; align-items: center; padding: 0 2px; }
.logo { width: 16px; height: 16px; background: #2fbf71; border-radius: 2px; margin-right: 5px; display: flex; align-items: center; justify-content: center; flex: none; }
.lg1 { width: 9px; height: 11px; border-left: 2px solid #fff; background: linear-gradient(#fff, #fff) 0 4px/7px 2px no-repeat; }
.apptitle { flex: 1; white-space: pre; letter-spacing: .18px; }
.winctl { width: 46px; height: 23px; display: flex; align-items: center; justify-content: center; flex: none; }
.wmin { width: 10px; height: 1px; background: #000; }
.wmax { width: 9px; height: 9px; border: 1px solid #000; box-shadow: 2px -2px 0 -1px #fff, 2px -2px 0 0 #000; }
.wx { width: 11px; height: 11px; color: #000; }
.recorder { position: absolute; left: 1298px; top: 0; width: 58px; height: 11px; background: #3f4552; border-radius: 0 0 3px 3px; display: flex; padding: 2px 4px 4px; }
.rec-on { width: 14px; background: repeating-linear-gradient(90deg, #8fe2b8 0 1px, transparent 1px 2px); }
.rec-off { width: 34px; background: repeating-linear-gradient(90deg, #6a7080 0 1px, transparent 1px 2px); }
.badge { position: absolute; left: 1581px; top: -30px; width: 48px; height: 48px; border-radius: 50%; background: #45c45e; border: 2px solid #c4c4c4; box-shadow: 0 2px 5px #999; color: #fff; font-weight: bold; text-align: center; padding-top: 30px; line-height: 14px; }
.noticerow { height: 29px; display: flex; justify-content: flex-end; align-items: center; padding-right: 2px; }
.notice { color: #0b6a6e; width: 159px; }
.userbar { width: 223px; height: 29px; display: flex; align-items: center; gap: 4px; border-right: 1px solid #ddd; border-bottom: 2px solid #d4d4d4; padding-left: 2px; flex: none; }
.userbar .grip { margin-right: 2px; }
.uname { font-size: 13px; }
.bell { width: 12px; margin: 0 5px 0 6px; }
.menubar { height: 27px; width: 978px; display: flex; align-items: center; gap: 10px; padding: 2px 0 0 3px; border-right: 1px solid #ddd; border-bottom: 1px solid #ddd; }
.menubar > .grip { margin-right: -3px; }
.tb { display: flex; align-items: center; gap: 6px; }
.mainbar { height: 28px; padding: 2px 0 0 7px; }
.tight { gap: 4px; }
.ti { display: flex; align-items: center; gap: 4px; height: 100%; white-space: nowrap; }
.ic { width: 16px; height: 16px; flex: none; display: block; }
.off { color: #8d8d8d; }
.grip { width: 3px; height: 20px; background: repeating-linear-gradient(0deg, #bbb 0 1px, transparent 1px 3px); }
.sep { width: 1px; height: 22px; background: #a8a8a8; }
.dd { width: 0; height: 0; border-left: 3px solid transparent; border-right: 3px solid transparent; border-top: 4px solid #222; }
.off .dd { border-top-color: #999; }
.sigma { width: 16px; text-align: center; font-size: 14px; color: #333; }
.m-5 { margin-left: -5px; } .m-4 { margin-left: -4px; } .m-3 { margin-left: -3px; } .m-2 { margin-left: -2px; } .m-1 { margin-left: -1px; }
.m1 { margin-left: 1px; } .m2 { margin-left: 2px; } .m3 { margin-left: 3px; } .m4 { margin-left: 4px; }
.sel { display: flex; height: 21px; background: #fff; flex: none; }
.sel b { flex: 1; font-weight: 400; padding: 2px 0 0 2px; white-space: nowrap; overflow: hidden; font-size: 13px; }
.chev { width: 13px; background: #d0d0d0; border: 1px solid #b0b0b0; }
.chev::after { content: ""; display: block; width: 6px; height: 6px; margin: 5px auto 0; border-right: 1px solid #555; border-bottom: 1px solid #555; transform: rotate(45deg); }
.sel-floor { width: 79px; }
.s56 { width: 56px; } .s68 { width: 68px; }
.dim b { color: #808080; background: #f6f6f6; }

/* workspace */
.work { flex: 1; display: flex; min-height: 0; background: #f0f0f0; }
.nav { width: 306px; padding-top: 3px; display: flex; flex-direction: column; flex: none; }
.paneltitle { height: 15px; display: flex; align-items: center; background: #f0f0f0; border: 1px solid #9a9a9a; font-size: 13px; line-height: 13px; flex: none; }
.paneltitle span { flex: 1; }
.pin { width: 9px; height: 11px; margin-right: 9px; }
.cl { width: 9px; height: 9px; margin-right: 5px; color: #555; }
.paneltitle.active { background: #0054e0; color: #fff; border: 0; height: 16px; }
.paneltitle.active .pin { fill: #fff; }
.paneltitle.active .cl { color: #fff; }
.navbtn { height: 22px; margin: 0; padding: 2px 0 0; font: inherit; color: #000; background: #f0f0f0; border: 1px solid #a4a4a4; width: 305px; flex: none; }
.navbtn + .navbtn { margin-top: 1px; }
.treebar { height: 26px; background: #fff; border: 1px solid #a4a4a4; width: 305px; display: flex; align-items: center; gap: 8px; padding-left: 7px; flex: none; }
.tbtn { width: 15px; height: 15px; background: linear-gradient(#e4ecf8, #c8d8f0); display: flex; align-items: center; justify-content: center; }
.tbtn::before { content: ""; width: 9px; height: 2px; background: #3a80c8; }
.tbtn.plus { background: linear-gradient(#3a80c8, #3a80c8) 50% 50%/2px 9px no-repeat, linear-gradient(#e4ecf8, #c8d8f0); }
.tree { flex: 1; min-height: 0; background: #fff; border: 1px solid #a0a0a0; border-width: 1px 1px 2px 1px; margin: 1px 0 1px 2px; width: 303px; padding-top: 2px; }
.r { height: 16px; display: flex; align-items: center; white-space: nowrap; }
.cv { width: 6px; height: 6px; margin: 0 4px 0 8px; border-right: 2px solid #aaa; border-top: 2px solid #aaa; transform: rotate(45deg); }
.cv.open { border-color: #555; transform: rotate(135deg); }
.tw { width: 4px; height: 1px; margin-right: 1px; background: repeating-linear-gradient(90deg, #888 0 1px, transparent 1px 2px); }
.fd { width: 15px; height: 14px; flex: none; margin-right: 6px; }
.t2 b, .lname b { font: 400 10px/16px "Liberation Mono", monospace; }
.gd { width: 43px; height: 16px; background:
  repeating-linear-gradient(0deg, #888 0 1px, transparent 1px 2px) 12px 0/1px 100% no-repeat,
  repeating-linear-gradient(0deg, #888 0 1px, transparent 1px 2px) 31px 0/1px 100% no-repeat,
  repeating-linear-gradient(90deg, #888 0 1px, transparent 1px 2px) 32px 8px/11px 1px no-repeat; }
.gd.end { background:
  repeating-linear-gradient(0deg, #888 0 1px, transparent 1px 2px) 12px 0/1px 100% no-repeat,
  repeating-linear-gradient(0deg, #888 0 1px, transparent 1px 2px) 31px 0/1px 8px no-repeat,
  repeating-linear-gradient(90deg, #888 0 1px, transparent 1px 2px) 32px 8px/11px 1px no-repeat; }
.kid .fd { margin-right: 5px; }
.picked .fd, .picked .t2 { background: #d6d6d6; }
.picked .fd { margin-right: 0; }
.picked .t2 { padding: 0 5px; height: 16px; }

/* middle */
.mid { width: 354px; margin-left: 5px; padding-top: 3px; display: flex; flex-direction: column; flex: none; }
.listbar { height: 28px; padding-left: 5px; flex: none; }
.newic { margin-left: -18px; width: 14px; height: 12px; margin-top: -6px; }
.delx { width: 14px; height: 14px; color: #555; }
.searchrow { display: flex; align-items: center; gap: 6px; flex: none; }
.search { width: 329px; height: 24px; background: #fff; border: 1px solid #8a8a8a; border-width: 1px 1px 2px 1px; color: #666; padding: 3px; font-size: 13px; }
.listbox { height: 299px; margin: 4px 0 0 2px; width: 352px; display: flex; background: #fff; border: 1px solid #a8a8a8; border-width: 1px 0 2px 1px; overflow: hidden; flex: none; }
.listview { width: 331px; height: 296px; overflow: hidden; flex: none; }
.lrow { display: grid; grid-template-columns: 25px 305px; height: 19px; border-bottom: 1px solid #c0c0c0; }
.lnum { text-align: center; background: linear-gradient(#fff, #e8e8e8); border-right: 1px solid #c0c0c0; font: 11px/18px "Liberation Mono", monospace; }
.lname { padding: 1px 0 0 20px; border-right: 1px solid #c0c0c0; line-height: 17px; }
.lrow.head { height: 21px; }
.lrow.head .lname { text-align: center; padding: 0; background: linear-gradient(#fbdca2, #f1b85e); color: #580a6a; line-height: 20px; }
.lrow.head .lnum { background: #f4f4f4; }
.lrow.on .lnum { background: #fcd28f; color: #580a6a; }
.lrow.on .lname { background: #d6e8f8; }
.vscroll { width: 19px; background: #f0f0f0; display: flex; flex-direction: column; align-items: center; flex: none; }
.vscroll .up, .vscroll .down { width: 6px; height: 6px; border-left: 2px solid #666; border-top: 2px solid #666; transform: rotate(45deg); margin-top: 7px; }
.vscroll .thumb { width: 15px; height: 141px; background: #c8c8c8; margin-top: 3px; }
.vscroll .down { transform: rotate(225deg); margin-top: 122px; }
.paneltitle.second { height: 16px; margin: 6px 0 0 1px; width: 352px; padding-bottom: 2px; }
.propbox { height: 433px; margin: 2px 0 0 2px; width: 352px; background: #fff; border: 1px solid #a8a8a8; border-width: 1px 1px 2px 1px; flex: none; }
.proptable { display: grid; grid-template-columns: 83px 95px; grid-template-rows: repeat(10, 21px) 19px 19px; }
.proptable > div { border: 1px solid #c0c0c0; border-width: 0 1px 1px 0; line-height: 20px; white-space: nowrap; overflow: hidden; }
.proptable .hi { line-height: 17px; }
.proptable .lo { line-height: 24px; }
.phead { padding-left: 2px; font-size: 13px; background: linear-gradient(#fff, #eee); }
.phead.val { background: linear-gradient(#fbdca2, #f1b85e); color: #580a6a; }
.pn { padding-left: 20px; }
.pn.blue { color: #0000f0; }
.pv { padding-left: 2px; font-family: "Liberation Mono", monospace; font-size: 11px; background: #fff; }
.pv.on { background: #d6e8f8; }
.proptable .pn.grp { display: flex; align-items: center; padding-left: 3px; gap: 5px; line-height: 18px; }
.pl { width: 12px; height: 12px; border: 1px solid #bbb; background: linear-gradient(#222, #222) 50% 50%/8px 1px no-repeat, linear-gradient(#222, #222) 50% 50%/1px 8px no-repeat; }
.descbox { flex: 1; margin: 2px 0 1px 0; width: 354px; border: 1px solid #a8a8a8; border-width: 1px 1px 2px 1px; display: flex; align-items: center; justify-content: center; font: 10px "Liberation Mono", monospace; }

/* right */
.right { width: 1252px; margin-left: 3px; display: flex; flex-direction: column; flex: none; }
.rows { height: 85px; padding-top: 2px; flex: none; }
.rowline { height: 28px; display: flex; }
.rows .rowline:last-child { height: 27px; }
.panel { height: 100%; padding-left: 1px; padding-right: 4px; border-right: 1px solid #d2d2d2; border-bottom: 2px solid #d2d2d2; }
.push79 { margin-left: 79px; padding-right: 6px; }
.push67 { margin-left: 67px; padding-right: 6px; }
.press { background: #c4def4; border: 1px solid #9fcaec; padding: 0 3px; height: 24px; }
.canvas { display: block; flex: none; }
.pink { fill: #ff7db9; } .y { fill: #ff0; } .p { fill: #8000ff; } .b { fill: #0080ff; }
.axis { fill: none; stroke: #f00; stroke-width: 1; }
.axis.dark { stroke: #a00020; }
.bubble circle { fill: none; stroke: #008000; stroke-dasharray: 2 1; }
.bubble text { fill: #3a8a70; font: 16px "Liberation Sans", sans-serif; text-anchor: middle; }
.gr { stroke: #0f0; stroke-width: 3; } .grf { fill: #0f0; }
.rd { stroke: #f00; stroke-width: 3; } .rdf { fill: #f00; }
.zd { fill: #0080ff; }
.ucs text { font: 12px "Liberation Mono", monospace; }
.tg { fill: #0f0; } .tr { fill: #f00; } .tb2 { fill: #0080ff; }
.note { fill: #ed1c24; font: 24px "Noto Sans CJK SC", sans-serif; letter-spacing: 1px; }
.mark { fill: none; stroke: #ed1c24; stroke-width: 4.200; stroke-linecap: round; stroke-linejoin: round; }
.wm { fill: rgba(120, 90, 110, .3); font: 14px "Noto Sans CJK SC", sans-serif; }
.wm.big { font-size: 20px; }
.bottom { height: 30px; flex: none; }
.grayx { color: #8a8a8a; }
.blk { color: #000; }
.num { height: 22px; background: #f6f6f6; border: 1px solid #fff; text-align: right; padding-right: 3px; line-height: 20px; flex: none; color: #808080; font-size: 13px; }
.w41 { width: 41px; } .w52 { width: 52px; }
.spin { width: 13px; height: 22px; display: flex; flex-direction: column; gap: 2px; align-items: center; justify-content: center; border: 1px solid #ddd; }
.spin i { width: 0; height: 0; border-left: 3px solid transparent; border-right: 3px solid transparent; border-bottom: 4px solid #888; }
.spin i + i { border-bottom: 0; border-top: 4px solid #888; }
.check { width: 13px; height: 13px; background: #fff; border: 1px solid #333; }

/* status */
.status { height: 22px; flex: none; display: flex; align-items: center; border-top: 1px solid #d2d2d2; font: 10px/18px "Liberation Mono", monospace; position: relative; }
.status > span { border-right: 1px solid #d8d8d8; height: 21px; padding-left: 1px; white-space: nowrap; line-height: 20px; }
.status b { font-weight: 400; font-family: "Liberation Mono", monospace; }
.c1 { width: 150px; }
.c2, .c3 { font: 12px/20px "Noto Sans CJK SC", sans-serif; }
.c2 { width: 80px; } .c3 { width: 129px; }
.c4 { width: 50px; }
.c5 { margin-left: 1289px; width: 60px; border-left: 1px solid #d8d8d8; border-right: 0 !important; }
.ime { position: absolute; right: 28px; bottom: 1px; width: 158px; height: 25px; background: #ece9d8; border: 1px solid #fff; border-right-color: #999; border-bottom-color: #999; display: flex; gap: 1px; padding: 2px 3px; font-family: "Noto Sans CJK SC", sans-serif; }
.k { background: #c6c6c6; height: 19px; width: 19px; display: flex; align-items: center; justify-content: center; box-shadow: inset -1px -1px 0 #666, inset 1px 1px 0 #fff; }
.k.a { font: bold 17px "Liberation Serif", serif; color: #8a0000; }
.k.name { width: 70px; font-size: 16px; line-height: 19px; }
.i14 { width: 14px; height: 14px; }
.dots { font: 12px "Liberation Sans", sans-serif; }
.kbd { background: repeating-linear-gradient(90deg, #fff 0 2px, #888 2px 3px) 3px 6px/13px 8px no-repeat, #999; }

/* taskbar */
.taskbar { height: 40px; flex: none; display: flex; align-items: stretch; background: linear-gradient(90deg, #000 0, #0a0a0a 400px, #14110c 1100px, #100d08 100%); color: #fff; }
.start { width: 48px; display: flex; align-items: center; justify-content: center; flex: none; }
.tsearch { width: 344px; background: #333; display: flex; align-items: center; padding-left: 10px; color: #a0a0a0; font: 14px "Noto Sans CJK SC", sans-serif; flex: none; }
.cortana { width: 18px; height: 18px; border: 3px solid #e4e4e4; border-radius: 50%; margin-right: 8px; }
.tsearch span { flex: 1; }
.tmic { margin-right: 13px; }
.slot { width: 49px; display: flex; align-items: center; justify-content: center; flex: none; border-bottom: 2px solid transparent; padding-top: 1px; }
.g5 { margin-left: 7px; }
.run { border-bottom-color: #76b9ed; border-left: 4px solid transparent; border-right: 5px solid transparent; border-bottom-width: 2px; }
.cur { background: #3c3c3c; width: 48px; border-left: 0; border-right: 0; }
.i20 { width: 20px; height: 20px; } .i24 { width: 24px; height: 24px; }
.edge { font: bold 32px/32px "Liberation Sans", sans-serif; color: #0078d7; margin-top: -8px; }
.ie { width: 22px; height: 26px; background: #1f9ed8; border-radius: 3px; color: #fff; font: 26px/22px "Liberation Sans", sans-serif; text-align: center; }
.word { width: 24px; height: 26px; background: linear-gradient(90deg, #2b579a 60%, #fff 60%); display: flex; padding-left: 2px; align-items: center; }
.word b { font: bold 13px "Liberation Sans", sans-serif; color: #fff; }
.gcl { width: 22px; height: 24px; background: #30c070; border-radius: 4px; display: flex; align-items: center; justify-content: center; }
.gcl .lg1 { width: 12px; height: 15px; border-left: 3px solid #fff; background: linear-gradient(#fff, #fff) 0 5px/9px 3px no-repeat; }
.tray { flex: 1; display: flex; align-items: center; padding-left: 612px; }
.tri { flex: none; display: block; }
.caret { width: 8px; height: 8px; border-left: 1px solid #fff; border-top: 1px solid #fff; transform: rotate(45deg); margin-top: 4px; }
.batt { width: 16px; height: 14px; margin-left: 12px; }
.wifi { width: 16px; height: 16px; margin-left: 10px; }
.vol { width: 16px; height: 16px; margin-left: 8px; }
.imebox { width: 16px; height: 16px; margin-left: 7px; background: #888; color: #fff; text-align: center; line-height: 15px; font-family: "Noto Sans CJK SC", sans-serif; flex: none; }
.flag { width: 15px; height: 16px; margin-left: 12px; }
.clock { width: 70px; margin-left: 12px; display: flex; flex-direction: column; align-items: center; color: #ddd; line-height: 19px; font-size: 12px; flex: none; }
.notif { width: 16px; height: 14px; margin-left: 14px; }
```
